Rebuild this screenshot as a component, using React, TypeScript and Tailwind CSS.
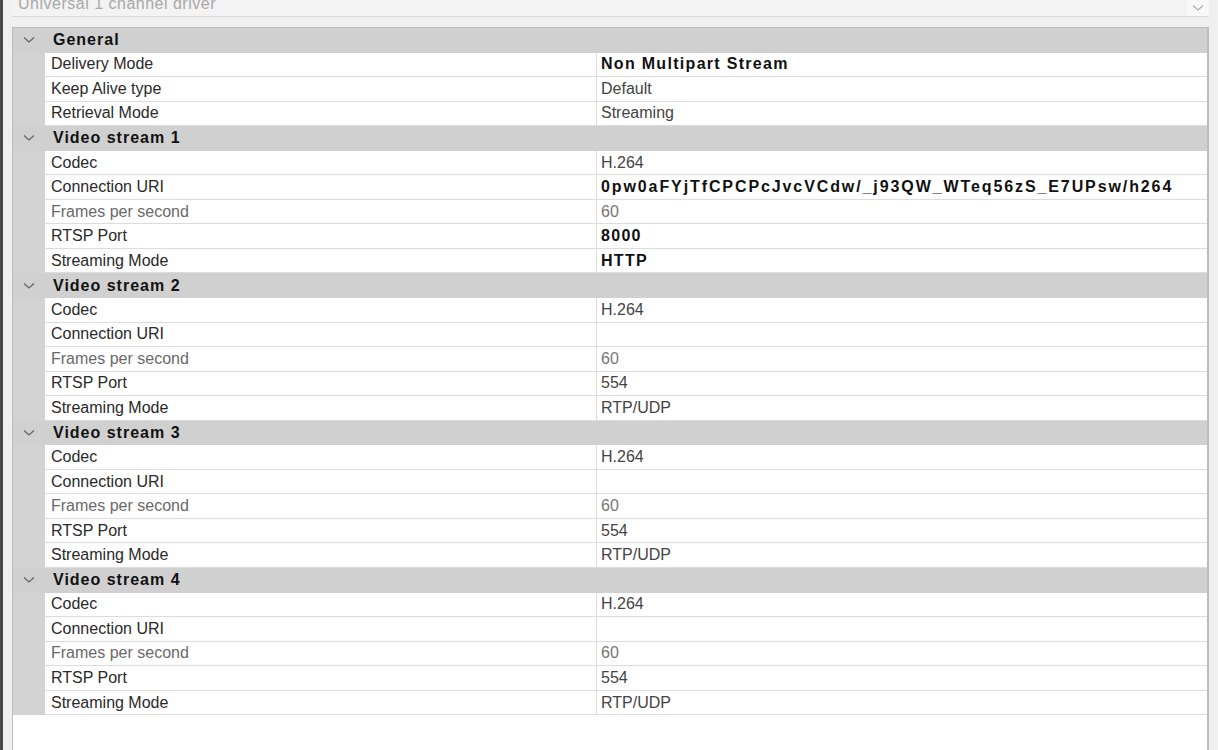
import React from "react";

type Prop = { name: string; value: string; bold?: boolean; dim?: boolean; wide?: boolean };
type Category = { title: string; props: Prop[] };

const stream = (uri: string, port: string, mode: string, bold: boolean): Prop[] => [
  { name: "Codec", value: "H.264" },
  { name: "Connection URI", value: uri, bold, wide: true },
  { name: "Frames per second", value: "60", dim: true },
  { name: "RTSP Port", value: port, bold },
  { name: "Streaming Mode", value: mode, bold },
];

const categories: Category[] = [
  {
    title: "General",
    props: [
      { name: "Delivery Mode", value: "Non Multipart Stream", bold: true },
      { name: "Keep Alive type", value: "Default" },
      { name: "Retrieval Mode", value: "Streaming" },
    ],
  },
  { title: "Video stream 1", props: stream("0pw0aFYjTfCPCPcJvcVCdw/_j93QW_WTeq56zS_E7UPsw/h264", "8000", "HTTP", true) },
  { title: "Video stream 2", props: stream("", "554", "RTP/UDP", false) },
  { title: "Video stream 3", props: stream("", "554", "RTP/UDP", false) },
  { title: "Video stream 4", props: stream("", "554", "RTP/UDP", false) },
];

function Chevron({ className }: { className?: string }) {
  return (
    <svg width="12" height="8" viewBox="0 0 12 8" className={className}>
      <polyline points="1,1.5 6,6 11,1.5" fill="none" stroke="currentColor" strokeWidth="1.3" />
    </svg>
  );
}

function CategoryRow({ title }: { title: string }) {
  return (
    <div className="flex h-[24.56px] items-center bg-[#d0d0d0]">
      <div className="flex w-[32px] justify-center text-[#666]">
        <Chevron />
      </div>
      <div className="pl-[8px] font-bold tracking-[1px] text-[#111]">{title}</div>
    </div>
  );
}

function valueClass(p: Prop) {
  if (p.bold && p.wide) return "font-bold tracking-[1.9px] text-[#111]";
  if (p.bold) return "font-bold tracking-[1.3px] text-[#111]";
  if (p.dim) return "text-[#777]";
  return "text-[#444]";
}

function PropRow({ p }: { p: Prop }) {
  return (
    <div className="flex h-[24.56px]">
      <div className="w-[32px] shrink-0 bg-[#d3d3d3]" />
      <div className="flex w-[552px] shrink-0 items-center border-b border-r border-[#dcdcdc] bg-white pl-[6px]">
        <span className={p.dim ? "text-[#6a6a6a]" : "text-[#2a2a2a]"}>{p.name}</span>
      </div>
      <div className="flex flex-1 items-center border-b border-[#dcdcdc] bg-white pl-[4px]">
        <span className={valueClass(p)}>{p.value}</span>
      </div>
    </div>
  );
}

export default function App() {
  return (
    <div
      className="flex h-[750px] w-[1218px] overflow-hidden bg-[#f0f0f0] text-[16px] leading-none"
      style={{ fontFamily: '"Liberation Sans", Arial, sans-serif' }}
    >
      <div className="w-[3px] shrink-0 bg-[#4a4a4a]" />
      <div className="flex flex-1 flex-col pl-[9px] pr-[9px]">
        <div className="flex h-[17px] items-start overflow-hidden border-b border-[#dadada] bg-[#f3f3f3]">
          <div className="-mt-[4px] flex-1 pl-[6px] text-[16px] leading-[16px] tracking-[0.5px] text-[#a8a8a8]">
            Universal 1 channel driver
          </div>
          <div className="flex h-[16px] w-[22px] items-center justify-center bg-[#f9f9f9] text-[#b0b0b0]">
            <Chevron />
          </div>
        </div>
        <div className="mt-[10px] flex flex-1 flex-col border-l border-r-2 border-t border-[#bdbdbd] bg-white">
          {categories.map((c) => (
            <div key={c.title}>
              <CategoryRow title={c.title} />
              {c.props.map((p) => (
                <PropRow key={p.name} p={p} />
              ))}
            </div>
          ))}
        </div>
      </div>
    </div>
  );
}
